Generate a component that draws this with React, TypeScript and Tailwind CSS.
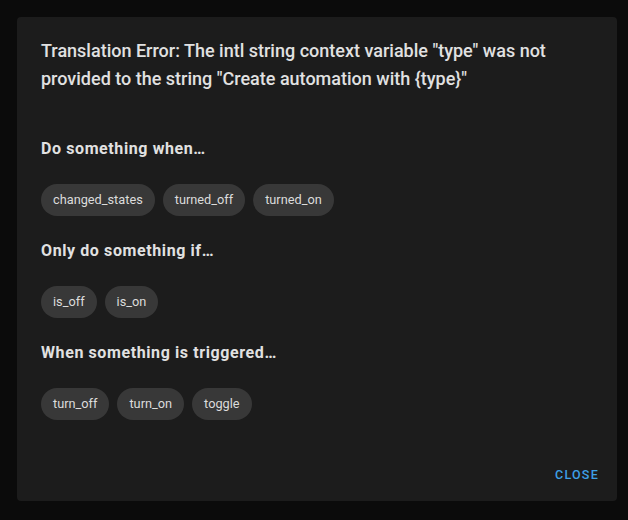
import React from "react";

const Chip = ({ label }: { label: string }) => (
  <div className="h-8 px-3 rounded-full bg-[#383838] flex items-center text-[12.75px] text-[#dcdcdc] leading-none">
    {label}
  </div>
);

const Section = ({ title, chips }: { title: string; chips: string[] }) => (
  <div className="flex flex-col gap-[23px]">
    <div className="h-6 flex items-center text-[16px] font-bold text-[#e1e1e1] tracking-[0.6px]">{title}</div>
    <div className="flex gap-2">
      {chips.map((c) => (
        <Chip key={c} label={c} />
      ))}
    </div>
  </div>
);

export default function App() {
  return (
    <div
      className="w-[628px] h-[520px] bg-[#0b0b0b] p-[17px] pr-[11px] pb-[19px]"
      style={{ fontFamily: "Roboto, 'Noto Sans', sans-serif" }}
    >
      <div className="w-[600px] h-[484px] bg-[#1c1c1c] rounded-[4px] flex flex-col">
        <div className="pt-5 px-6 text-[18px] font-medium leading-[28px] text-[#e1e1e1]">
          Translation Error: The intl string context variable "type" was not provided to the string "Create automation with {"{type}"}"
        </div>
        <div className="mt-[44px] px-6 flex flex-col gap-[23px]">
          <Section title="Do something when…" chips={["changed_states", "turned_off", "turned_on"]} />
          <Section title="Only do something if…" chips={["is_off", "is_on"]} />
          <Section title="When something is triggered…" chips={["turn_off", "turn_on", "toggle"]} />
        </div>
        <div className="mt-auto flex justify-end pr-[10px] pb-2">
          <button className="h-9 px-2 text-[12.5px] font-medium tracking-[1.25px] text-[#3ea0e8] uppercase">
            Close
          </button>
        </div>
      </div>
    </div>
  );
}
